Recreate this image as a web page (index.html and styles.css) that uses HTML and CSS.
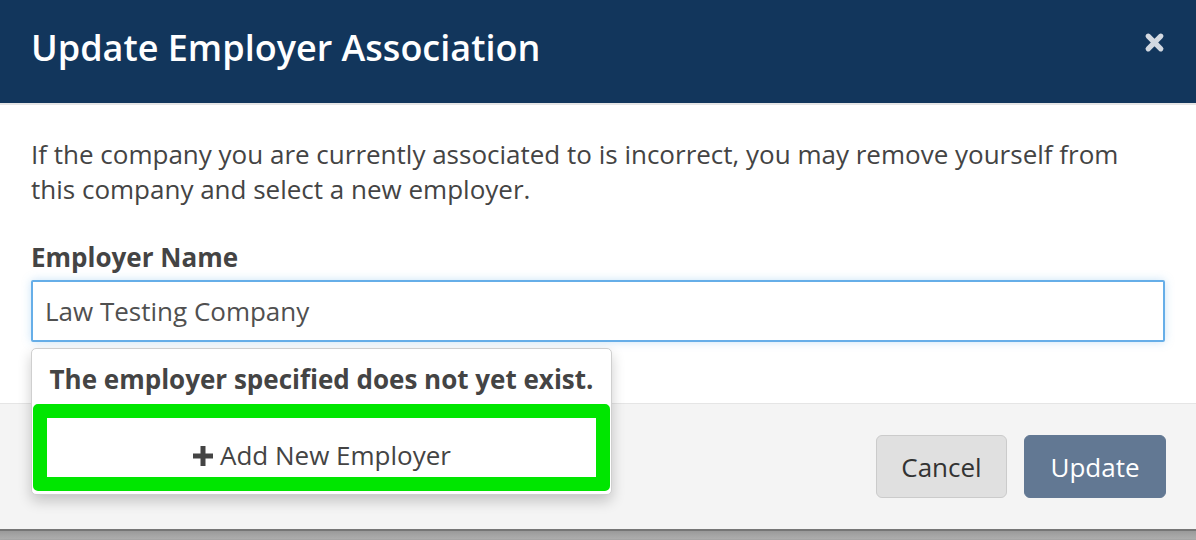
FILE: index.html
```html
<!DOCTYPE html>
<html>
<head>
<meta charset="utf-8">
<link rel="stylesheet" href="styles.css">
</head>
<body>
<div class="modal">
  <div class="modal-header">
    <h1 class="modal-title">Update Employer Association</h1>
    <button class="close" aria-label="Close">
      <svg width="21" height="21" viewBox="0 0 20 20"><path d="M4 4 L16 16 M16 4 L4 16" stroke="#d3d9e1" stroke-width="5" stroke-linecap="round"/></svg>
    </button>
  </div>
  <div class="modal-body">
    <p class="intro">If the company you are currently associated to is incorrect, you may remove yourself from this company and select a new employer.</p>
    <div class="form-group">
      <label class="label">Employer Name</label>
      <div class="input">Law Testing Company</div>
      <div class="dropdown">
        <div class="dropdown-heading">The employer specified does not yet exist.</div>
        <div class="highlight">
          <div class="add-item">
            <svg class="plus" width="22" height="22" viewBox="0 0 22 22"><path d="M11 1 V21 M1 11 H21" stroke="#444" stroke-width="5"/></svg>
            <span>Add New Employer</span>
          </div>
        </div>
      </div>
    </div>
  </div>
  <div class="modal-footer">
    <button class="btn btn-default">Cancel</button>
    <button class="btn btn-primary">Update</button>
  </div>
</div>
<div class="backdrop-strip"></div>
</body>
</html>
```
FILE: styles.css
```css
* { box-sizing: border-box; }
html, body { margin: 0; padding: 0; }
body {
  background: #a9a9a9;
  font-family: "Open Sans", "Noto Sans", sans-serif;
  color: #444;
  width: 1196px;
  height: 540px;
  overflow: hidden;
}
.modal {
  background: #fff;
  border-bottom: 2px solid #767676;
  box-shadow: 0 3px 8px rgba(0,0,0,0.25);
}
.modal-header {
  height: 105px;
  background: #12365c;
  border-bottom: 2px solid #e5e5e5;
  display: flex;
  align-items: flex-start;
  justify-content: space-between;
  padding: 26px 31px 0 31px;
}
.modal-title {
  margin: 0;
  color: #fff;
  font-size: 36px;
  font-weight: 600;
  line-height: 44px;
}
.close {
  background: none;
  border: 0;
  padding: 0;
  margin-top: 5px;
  width: 22px;
  height: 22px;
  display: flex;
  align-items: center;
  justify-content: center;
}
.modal-body {
  padding: 32px 31px 0 31px;
}
.intro {
  margin: 0 0 33px 0;
  font-size: 26px;
  line-height: 35px;
  color: #444;
}
.form-group {
  position: relative;
  padding-bottom: 61px;
}
.label {
  display: block;
  font-size: 26px;
  font-weight: 700;
  line-height: 34px;
  margin-bottom: 6px;
}
.input {
  height: 62px;
  border: 2px solid #66aee8;
  border-radius: 2px;
  box-shadow: 0 0 10px rgba(102,175,233,0.35);
  padding: 0 12px;
  font-size: 26px;
  line-height: 58px;
  color: #505050;
}
.dropdown {
  position: absolute;
  left: 0;
  top: 108px;
  width: 581px;
  background: #fff;
  border: 1px solid #cfcfcf;
  border-radius: 5px;
  box-shadow: 0 6px 14px rgba(0,0,0,0.2);
  padding: 0 1px 3px 1px;
  z-index: 5;
}
.dropdown-heading {
  text-align: center;
  font-size: 26px;
  font-weight: 700;
  line-height: 30px;
  padding: 15px 0 10px;
  color: #444;
}
.highlight {
  border: 14px solid #00e600;
  border-radius: 5px;
  background: #fff;
}
.add-item {
  height: 59px;
  display: flex;
  align-items: center;
  justify-content: center;
  gap: 6px;
  font-size: 26px;
  color: #444;
  padding-top: 14px;
}
.plus { margin-top: 2px; }
.modal-footer {
  background: #f4f4f4;
  border-top: 1px solid #e5e5e5;
  height: 126px;
  display: flex;
  justify-content: flex-end;
  align-items: flex-start;
  gap: 17px;
  padding: 31px 30px 0 0;
}
.btn {
  height: 63px;
  border-radius: 6px;
  font-family: "Open Sans", "Noto Sans", sans-serif;
  font-size: 26px;
  padding: 0;
}
.btn-default {
  width: 131px;
  background: #e0e0e0;
  border: 1px solid #cbcbcb;
  color: #333;
}
.btn-primary {
  width: 142px;
  background: #627893;
  border: 1px solid #627893;
  color: #fff;
}
.backdrop-strip {
  height: 8px;
  background: linear-gradient(#9a9a9a, #adadad);
}
```
